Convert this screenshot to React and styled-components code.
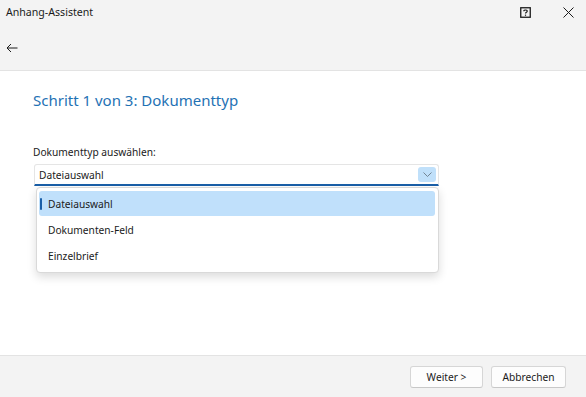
import React from "react";
import styled, { createGlobalStyle } from "styled-components";

const GlobalStyle = createGlobalStyle`
  html, body {
    margin: 0;
    padding: 0;
    background: #ffffff;
  }
  body {
    font-family: "Noto Sans", "Open Sans", sans-serif;
    color: #1b1b1b;
  }
`;

const Window = styled.div`
  width: 586px;
  height: 397px;
  display: flex;
  flex-direction: column;
  background: #ffffff;
  overflow: hidden;
`;

const Header = styled.div`
  background: #f3f3f3;
  border-bottom: 1px solid #e3e3e3;
  height: 70px;
  display: flex;
  flex-direction: column;
`;

const TitleBar = styled.div`
  height: 30px;
  display: flex;
  align-items: center;
  padding-left: 6px;
`;

const WindowTitle = styled.span`
  flex: 1;
  font-size: 10.6px;
  color: #1b1b1b;
  margin-top: -6px;
`;

const TitleButton = styled.button`
  width: ${(p) => p.$w}px;
  height: 30px;
  border: none;
  background: transparent;
  display: flex;
  align-items: center;
  justify-content: center;
  padding: 0;
  margin-top: -5px;
`;

const NavRow = styled.div`
  height: 40px;
  display: flex;
  align-items: center;
  padding: 0 6px;
`;

const BackButton = styled.button`
  border: none;
  background: transparent;
  padding: 0;
  display: flex;
  margin-top: -4px;
`;

const Content = styled.div`
  flex: 1;
  padding: 19px 33px 0;
`;

const StepTitle = styled.h1`
  margin: 0;
  font-size: 15px;
  font-weight: 400;
  color: #1f72b4;
  line-height: 20px;
`;

const Field = styled.div`
  margin-top: 35px;
  width: 406px;
  position: relative;
`;

const Label = styled.div`
  font-size: 10.2px;
  line-height: 14px;
  margin-bottom: 5px;
`;

const Select = styled.div`
  height: 19px;
  margin-left: 1px;
  background: #ffffff;
  border: 1px solid #e5e5e5;
  border-bottom: 2px solid #1a5fa8;
  border-radius: 3px 3px 0 0;
  display: flex;
  align-items: center;
  padding: 0 2px 0 4px;
  font-size: 10.2px;
`;

const SelectValue = styled.span`
  flex: 1;
`;

const DropButton = styled.span`
  width: 18px;
  height: 15px;
  border-radius: 3px;
  background: #c0e0fa;
  display: flex;
  align-items: center;
  justify-content: center;
`;

const Popup = styled.div`
  position: absolute;
  left: 3px;
  right: 0;
  top: 42px;
  background: #ffffff;
  border: 1px solid #d9d9d9;
  border-radius: 4px;
  box-shadow: 0 4px 10px rgba(0, 0, 0, 0.14);
  padding: 3px 3px 4px 2px;
  display: flex;
  flex-direction: column;
  gap: 1px;
`;

const Option = styled.div`
  height: 25px;
  display: flex;
  align-items: center;
  padding-left: 9px;
  font-size: 10.2px;
  border-radius: 3px;
  position: relative;
  background: ${(p) => (p.$active ? "#c0e0fb" : "transparent")};
  &::before {
    content: "";
    display: ${(p) => (p.$active ? "block" : "none")};
    position: absolute;
    left: 1px;
    top: 7px;
    width: 2px;
    height: 12px;
    border-radius: 1px;
    background: #1a5fa8;
  }
`;

const Footer = styled.div`
  height: 41px;
  background: #f3f3f3;
  border-top: 1px solid #e3e3e3;
  display: flex;
  justify-content: flex-end;
  align-items: center;
  gap: 8px;
  padding: 0 20px 0 0;
`;

const Button = styled.button`
  width: ${(p) => p.$w}px;
  height: 22px;
  background: #fdfdfd;
  border: 1px solid #d6d6d6;
  border-bottom-color: #c8c8c8;
  border-radius: 3px;
  font-family: "Noto Sans", "Open Sans", sans-serif;
  font-size: 10.2px;
  color: #1b1b1b;
  padding: 0;
`;

const options = ["Dateiauswahl", "Dokumenten-Feld", "Einzelbrief"];

export default function App() {
  return (
    <Window>
      <GlobalStyle />
      <Header>
        <TitleBar>
          <WindowTitle>Anhang-Assistent</WindowTitle>
          <TitleButton $w={49}>
            <svg width="11" height="11" viewBox="0 0 11 11">
              <rect x="0.75" y="0.75" width="9.5" height="9.5" fill="none" stroke="#1b1b1b" strokeWidth="1.3" />
              <path d="M3.8 4.2 C3.8 2.6 7.2 2.6 7.2 4.2 C7.2 5.3 5.5 5.2 5.5 6.6" fill="none" stroke="#1b1b1b" strokeWidth="1.2" />
              <rect x="4.9" y="7.6" width="1.2" height="1.2" fill="#1b1b1b" />
            </svg>
          </TitleButton>
          <TitleButton $w={36}>
            <svg width="11" height="11" viewBox="0 0 11 11">
              <path d="M0.5 0.5 L10.5 10.5 M10.5 0.5 L0.5 10.5" stroke="#1b1b1b" strokeWidth="1" />
            </svg>
          </TitleButton>
        </TitleBar>
        <NavRow>
          <BackButton>
            <svg width="12" height="10" viewBox="0 0 12 10">
              <path d="M11.5 5 H1 M5 1 L1 5 L5 9" fill="none" stroke="#1b1b1b" strokeWidth="1" />
            </svg>
          </BackButton>
        </NavRow>
      </Header>
      <Content>
        <StepTitle>Schritt 1 von 3: Dokumenttyp</StepTitle>
        <Field>
          <Label>Dokumenttyp auswählen:</Label>
          <Select>
            <SelectValue>Dateiauswahl</SelectValue>
            <DropButton>
              <svg width="9" height="5" viewBox="0 0 9 5">
                <path d="M0.5 0.5 L4.5 4.5 L8.5 0.5" fill="none" stroke="#6a7a88" strokeWidth="0.9" />
              </svg>
            </DropButton>
          </Select>
          <Popup>
            {options.map((o, i) => (
              <Option key={o} $active={i === 0}>
                {o}
              </Option>
            ))}
          </Popup>
        </Field>
      </Content>
      <Footer>
        <Button $w={73}>Weiter &gt;</Button>
        <Button $w={75}>Abbrechen</Button>
      </Footer>
    </Window>
  );
}
